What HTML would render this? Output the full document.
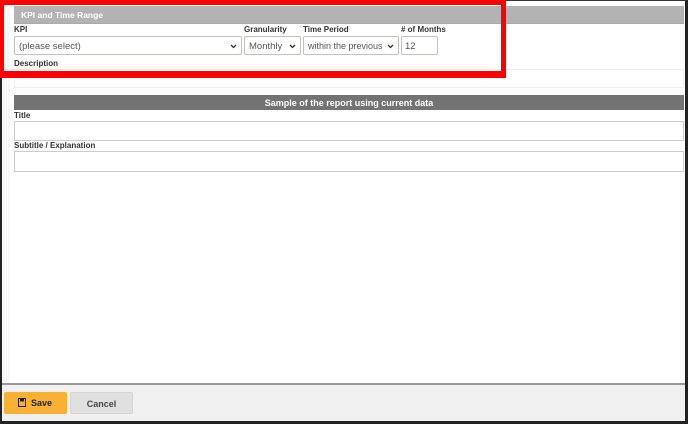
<!DOCTYPE html>
<html><head><style>
*{box-sizing:border-box;margin:0;padding:0}
body{width:688px;height:424px;overflow:hidden;background:#fff;font-family:"Liberation Sans",Arial,sans-serif;position:relative}
.a{position:absolute}
.lbl{position:absolute;font-size:8px;font-weight:bold;color:#333}
.sel{position:absolute;height:19px;border:1px solid #c8c0b8;border-radius:2px;background:#fff;font-size:9.5px;color:#555;padding:4px 0 0 4px;white-space:nowrap;overflow:hidden}
.sel svg{position:absolute;right:4px;top:7px}
</style></head><body>
<div class="a" style="left:0;top:0;width:2px;height:424px;background:#222"></div>
<div class="a" style="left:2px;top:0;width:8px;height:384px;background:#f8f8f8"></div>
<div class="a" style="left:685px;top:0;width:3px;height:424px;background:#222"></div>
<div class="a" style="left:0;top:0;width:688px;height:1px;background:#333"></div>
<div class="a" style="left:14px;top:6px;width:670px;height:18px;background:#b3b3b3;border-bottom:1px solid #aaa"></div>
<div class="a" style="left:21px;top:10px;font-size:8.5px;font-weight:bold;color:#fff">KPI and Time Range</div>
<div class="lbl" style="left:14px;top:25px">KPI</div>
<div class="lbl" style="left:244px;top:25px">Granularity</div>
<div class="lbl" style="left:303px;top:25px">Time Period</div>
<div class="lbl" style="left:401px;top:25px"># of Months</div>
<div class="sel" style="left:14px;top:36px;width:228px">(please select)<svg width="7" height="5"><path d="M1 1L3.5 3.5L6 1" stroke="#333" stroke-width="1.3" fill="none"/></svg></div>
<div class="sel" style="left:244px;top:36px;width:57px">Monthly<svg width="7" height="5" style="background:#fff"><path d="M1 1L3.5 3.5L6 1" stroke="#333" stroke-width="1.3" fill="none"/></svg></div>
<div class="sel" style="left:303px;top:36px;width:96px;font-size:9px">within the previous<svg width="7" height="5"><path d="M1 1L3.5 3.5L6 1" stroke="#333" stroke-width="1.3" fill="none"/></svg></div>
<div class="sel" style="left:401px;top:36px;width:37px;padding-left:3px">12</div>
<div class="lbl" style="left:14px;top:59px">Description</div>
<div class="a" style="left:14px;top:69px;width:670px;height:19px;border:1px solid #eee"></div>
<div class="a" style="left:14px;top:95px;width:670px;height:15px;background:#737373"></div>
<div class="a" style="left:14px;top:98px;width:670px;text-align:center;font-size:9px;font-weight:bold;color:#fff">Sample of the report using current data</div>
<div class="lbl" style="left:14px;top:111px">Title</div>
<div class="a" style="left:14px;top:121px;width:670px;height:20px;border:1px solid #ccc"></div>
<div class="lbl" style="left:14px;top:141px">Subtitle / Explanation</div>
<div class="a" style="left:14px;top:151px;width:670px;height:21px;border:1px solid #ccc"></div>
<div class="a" style="left:2px;top:383px;width:683px;height:2px;background:#999"></div>
<div class="a" style="left:2px;top:385px;width:683px;height:36px;background:#f0f0f0"></div>
<div class="a" style="left:0;top:421px;width:688px;height:3px;background:#222"></div>
<div class="a" style="left:4px;top:392px;width:63px;height:22px;background:#f8b133;border-radius:2px;font-size:9px;font-weight:bold;color:#222;padding:6px 0 0 14px">
<svg class="a" style="left:14px;top:6px" width="8" height="9"><rect x="0.5" y="0.5" width="7" height="8" fill="none" stroke="#222"/><rect x="2" y="1" width="4" height="2.5" fill="#222"/></svg><span style="margin-left:13px">Save</span></div>
<div class="a" style="left:70px;top:392px;width:63px;height:22px;background:#e0e0e0;border:1px solid #d4d4d4;border-radius:2px;font-size:9px;font-weight:bold;color:#444;text-align:center;padding-top:6px">Cancel</div>
<div class="a" style="left:0;top:0;width:506px;height:78px;border:solid #ff0000;border-width:5px 5px 7px 4px"></div>
</body></html>
